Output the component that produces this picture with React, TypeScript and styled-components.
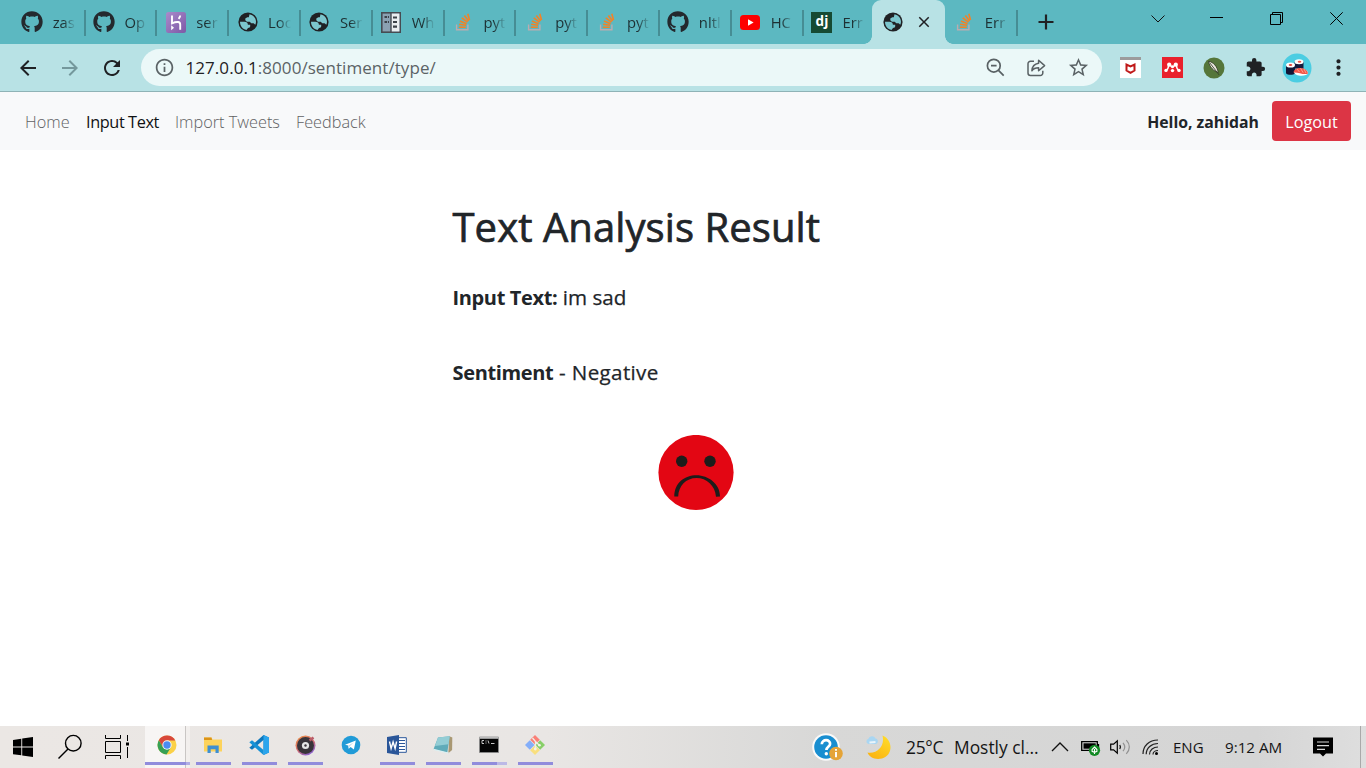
import type { ReactNode } from 'react';
import styled, { createGlobalStyle, css } from 'styled-components';
import { FaGithub } from 'react-icons/fa';
import {
  MdArrowBack,
  MdArrowForward,
  MdClose,
  MdExtension,
  MdInfoOutline,
  MdMoreVert,
  MdRefresh,
  MdStarOutline,
} from 'react-icons/md';

const GlobalStyle = createGlobalStyle`
  * {
    box-sizing: border-box;
  }

  body {
    margin: 0;
    overflow: hidden;
    background: white;
    font-family: 'Open Sans', 'Noto Sans', sans-serif;
  }

  svg {
    display: block;
    flex-shrink: 0;
  }
`;

const Screen = styled.div`
  width: 1366px;
  height: 768px;
  display: flex;
  flex-direction: column;
`;

/* ---------- browser tabs ---------- */

const TabStrip = styled.div`
  height: 44px;
  display: flex;
  padding-left: 13.8px;
  background: #5cb8c1;
`;

const Tab = styled.div<{ $divider?: boolean }>`
  width: 71.8px;
  height: 44px;
  display: flex;
  flex-shrink: 0;
  align-items: center;
  padding-left: 7.4px;
  color: #1d3033;

  ${({ $divider }) =>
    $divider &&
    css`
      background: linear-gradient(#468d94, #468d94) right 10px / 2px 26px no-repeat;
    `}
`;

const TabIcon = styled.span`
  width: 22px;
  display: flex;
  flex-shrink: 0;
  justify-content: center;
`;

const TabTitle = styled.span`
  width: 23px;
  margin-left: 9.5px;
  padding-bottom: 1px;
  font-size: 14.8px;
  line-height: 22px;
  white-space: nowrap;
  mask-image: linear-gradient(90deg, #000 45%, transparent 100%);
`;

const ActiveTab = styled.div`
  width: 73px;
  height: 44px;
  display: flex;
  flex-shrink: 0;
  position: relative;
  align-items: center;
  margin: 0 1px 0 -3.4px;
  padding-left: 11.5px;
  background: #b8e2e5;
  border-radius: 9px 9px 0 0;

  &::before,
  &::after {
    content: '';
    width: 8px;
    height: 8px;
    bottom: 0;
    position: absolute;
  }

  &::before {
    left: -8px;
    background: radial-gradient(circle at 0 0, transparent 7.5px, #b8e2e5 8px);
  }

  &::after {
    right: -8px;
    background: radial-gradient(circle at 100% 0, transparent 7.5px, #b8e2e5 8px);
  }

  .close {
    margin-left: 12px;
  }
`;

const NewTab = styled.div`
  width: 56px;
  display: flex;
  align-items: center;
  justify-content: center;
`;

const WindowControls = styled.div`
  height: 37px;
  display: flex;
  margin-left: auto;

  span {
    width: 60px;
    display: flex;
    align-items: center;
    justify-content: center;
  }

  span:first-child {
    width: 56px;
  }
`;

/* ---------- address bar ---------- */

const Toolbar = styled.div`
  height: 48px;
  display: flex;
  align-items: center;
  background: #b8e2e5;
  border-bottom: 1px solid #8fb3b6;
  color: #1f2124;
`;

const NavButtons = styled.div`
  width: 141px;
  display: flex;
  gap: 18px;
  padding-left: 16px;

  .disabled {
    color: #74989c;
  }
`;

const Omnibox = styled.div`
  width: 961px;
  height: 37px;
  display: flex;
  align-items: center;
  padding: 0 12px 0 13px;
  background: #ebf8f8;
  border-radius: 19px;
  color: #5b6366;
`;

const Url = styled.span`
  margin-left: 10.5px;
  margin-right: auto;
  font-size: 17px;
  line-height: 24px;
  letter-spacing: 0.06px;

  b {
    font-weight: 400;
    color: #1f2124;
  }
`;

const OmniActions = styled.div`
  display: flex;
  gap: 20px;
  align-items: center;
`;

const Extensions = styled.div`
  display: flex;
  align-items: center;
  margin-left: 8px;

  span {
    width: 41.6px;
    display: flex;
    justify-content: center;
  }
`;

/* ---------- page ---------- */

const Navbar = styled.nav`
  height: 58px;
  display: flex;
  align-items: center;
  padding: 0 15px 0 25px;
  background: #f8f9fa;
`;

const NavLink = styled.a<{ $active?: boolean; $width: number }>`
  width: ${({ $width }) => $width}px;
  padding-top: 1px;
  font-size: 16.3px;
  line-height: 24px;
  white-space: nowrap;
  font-weight: ${({ $active }) => ($active ? 400 : 300)};
  letter-spacing: ${({ $active }) => ($active ? -0.4 : 0)}px;
  color: ${({ $active }) => ($active ? '#101113' : '#606163')};
`;

const Greeting = styled.strong`
  margin-left: auto;
  padding-top: 1px;
  margin-right: 13px;
  font-size: 15.8px;
  font-weight: 700;
  color: #212529;
`;

const LogoutButton = styled.button`
  width: 79px;
  height: 40px;
  padding: 1px 0 0;
  border: 0;
  color: white;
  font: inherit;
  font-size: 16.2px;
  border-radius: 4px;
  background: #dc3545;
`;

const Content = styled.main`
  flex: 1;
  padding: 47px 0 0 452.5px;
  color: #212529;
`;

const Title = styled.h1`
  margin: 0;
  font-size: 40px;
  font-weight: 400;
  line-height: 60px;
  letter-spacing: 0.08px;
  white-space: nowrap;
  -webkit-text-stroke: 0.7px #212529;
`;

const ResultLine = styled.p<{ $spacing?: number }>`
  height: 30px;
  margin: 25px 0 45px;
  font-size: 20.6px;
  font-weight: 400;
  line-height: 30px;
  white-space: nowrap;
  letter-spacing: ${({ $spacing }) => $spacing ?? 0}px;
  -webkit-text-stroke: 0.25px #212529;

  b {
    font-size: 20px;
    font-weight: 700;
    letter-spacing: -0.35px;
    -webkit-text-stroke: 0;
  }

  & + & {
    margin: 0 0 48px;
  }
`;

const Face = styled.div`
  margin-left: 205px;
`;

/* ---------- taskbar ---------- */

const Taskbar = styled.footer`
  height: 42px;
  display: flex;
  background: linear-gradient(90deg, #ebe7e4 0%, #e9e6e4 40%, #d8d8d7 60%, #d5d5d5 92%, #dedede 100%);
`;

const SystemButton = styled.div<{ $width: number }>`
  width: ${({ $width }) => $width}px;
  display: flex;
  align-items: center;
  justify-content: center;
`;

const AppButton = styled.div<{ $running?: boolean }>`
  width: 46px;
  display: flex;
  padding-top: 9px;
  align-items: center;
  flex-direction: column;
  justify-content: space-between;

  &::after {
    content: '';
    width: 35px;
    height: 3px;
    margin-bottom: 3px;
    background: ${({ $running }) => ($running ? '#918cdc' : 'transparent')};
  }
`;

const StackedAppButton = styled(AppButton)`
  &::after {
    background: linear-gradient(90deg, #918cdc 71%, #bcb9e6 71%);
  }
`;

const ActiveAppButton = styled(AppButton)`
  width: 45px;
  align-items: flex-start;
  padding-left: 12px;
  background: linear-gradient(90deg, #f7f5f4 40px, #c9c6c4 40px 41px, #f2efed 41px);

  &::after {
    width: 45px;
    margin-left: -12px;
    background: linear-gradient(90deg, #918cdc 41px, #b1ade4 41px);
  }
`;

const Tray = styled.div`
  width: 549px;
  display: flex;
  align-items: center;
  margin-left: auto;
  border-right: 1px solid #a9a9a9;
  margin-right: 5px;
`;

const TrayItem = styled.span<{ $width: number }>`
  width: ${({ $width }) => $width}px;
  flex-shrink: 0;
`;

const TrayText = styled(TrayItem)<{ $size: number; $spacing?: number }>`
  color: #151515;
  padding-bottom: 1px;
  line-height: 22px;
  white-space: nowrap;
  font-size: ${({ $size }) => $size}px;
  letter-spacing: ${({ $spacing }) => $spacing ?? 0}px;
`;

/* ---------- drawings ---------- */

const GlobeIcon = () => (
  <svg width='20' height='20' viewBox='0 0 20 20'>
    <circle cx='10' cy='10' r='9.600' fill='#202124' />
    <g fill='#7cc6cd'>
      <path d='M2 9.800h4.300c2.300 0 3.600 1.200 3.600 2.900h2.300v1.500c0 1.200-.9 1.700-2.200 1.700l-1.500 2C4.700 17.400 2 14.200 2 9.800z' />
      <path d='M11.500 2.200c3.900.7 6.500 3.900 6.500 7.600 0 1.100-.3 2.200-.7 3l-1.700-1.500h-2.300l-1.600-1.500H8.900L7.300 8.200V6.500l2-1.300h1.500z' />
    </g>
  </svg>
);

const HerokuLogo = () => (
  <svg width='20' height='21' viewBox='0 0 20 21'>
    <defs>
      <linearGradient id='heroku' x1='0' y1='0' x2='1' y2='1'>
        <stop offset='0' stopColor='#a98bcb' />
        <stop offset='1' stopColor='#7d58a6' />
      </linearGradient>
    </defs>
    <rect width='20' height='21' rx='2.5' fill='url(#heroku)' />
    <path d='M6 3.5v7.8c2.200-1 4.200-1.500 6.100-1.300 1.500.2 2.100 1 2.100 2.400v5.400M14.200 3.500c-.1 1.200-.7 2.300-1.600 3.300' fill='none' stroke='white' strokeWidth='1.900' />
    <path d='M5.200 13.200v5l2.800-2.500z' fill='white' />
  </svg>
);

const StackLogo = () => (
  <svg width='16' height='18' viewBox='0 0 16 18'>
    <path d='M1.600 11.500v5.200h11.300v-5.200' fill='none' stroke='#bcabb0' strokeWidth='1.400' />
    <path
      d='M3.800 14.200h7M4.100 11.200l6.900 1.100M4.900 8l6.700 2.700M6.700 4.900l5.800 4.200M9.400 2.500l4.200 5.500M12.800.8l1.700 6.200'
      stroke='#f48225'
      strokeWidth='1.600'
    />
  </svg>
);

const CabinetIcon = () => (
  <svg width='20' height='21' viewBox='0 0 20 21'>
    <rect x='.8' y='.8' width='18.400' height='19.400' fill='#8ba1b2' stroke='#464b52' strokeWidth='1.600' />
    <path d='M10 1.600h8.400v17.800H10z' fill='#e9eef1' />
    <path d='M10 1v19' stroke='#464b52' strokeWidth='1.400' />
    <path d='M3.500 5h2.600M3.500 10h2.600M7 5h1M7 10h1M12 5.500h4M12 10h4M12 14.700h4' stroke='#3c4249' strokeWidth='2.200' />
  </svg>
);

const YoutubeLogo = () => (
  <svg width='20' height='15' viewBox='0 0 20 15'>
    <rect width='20' height='15' rx='3.500' fill='#fe0000' />
    <path d='M8 4.300v6.400l5.600-3.200z' fill='white' />
  </svg>
);

const DjangoLogo = styled.span`
  width: 21px;
  height: 21px;
  color: white;
  display: block;
  font-size: 13.5px;
  font-weight: 700;
  line-height: 18px;
  text-align: center;
  background: #164a33;
`;

const ZoomOutIcon = () => (
  <svg width='20' height='20' viewBox='0 0 20 20' fill='none' stroke='#596164' strokeWidth='1.700'>
    <circle cx='7.800' cy='7.700' r='6.400' />
    <path d='M5 7.700h5.600M12.500 12.400l5.200 5.200' />
  </svg>
);

const ShareIcon = () => (
  <svg width='21' height='20' viewBox='0 0 21 20' fill='none' stroke='#596164' strokeWidth='1.500'>
    <path d='M8 3.200H4.500a2.500 2.500 0 0 0-2.500 2.500v9.300a2.500 2.500 0 0 0 2.500 2.500h9.800a2.500 2.500 0 0 0 2.500-2.500v-2.200' />
    <path d='M12.600 2.200l6 5.400-6 5.200V9.800c-3 0-5.200.8-6.700 3 .2-4 2.600-7 6.700-7.600z' strokeLinejoin='round' />
  </svg>
);

const McAfeeIcon = () => (
  <svg width='21' height='21' viewBox='0 0 21 21'>
    <path d='M0 0h21v21H0z' fill='white' />
    <path d='M0 0h21v3H0z' fill='#9c9c9c' />
    <path d='M6.500 7.500v6l4 2.300 4-2.300v-6l-4 1.900z' fill='none' stroke='#c01818' strokeWidth='2' />
  </svg>
);

const MendeleyIcon = () => (
  <svg width='21' height='21' viewBox='0 0 21 21'>
    <path d='M0 0h21v21H0z' fill='#e9202c' />
    <g fill='white'>
      <circle cx='7.200' cy='7.600' r='2.100' />
      <circle cx='13.800' cy='7.600' r='2.100' />
      <circle cx='10.500' cy='9.700' r='1.500' />
      <circle cx='4' cy='13.400' r='1.700' />
      <circle cx='10.500' cy='13.600' r='1.700' />
      <circle cx='17' cy='13.400' r='1.700' />
    </g>
    <path d='M6.500 8c0 2.500-.5 4.200-2 5.200M14.500 8c0 2.500.5 4.200 2 5.200M8 8.500l2.500 1.500L13 8.500' stroke='white' strokeWidth='1.500' fill='none' />
  </svg>
);

const FeatherIcon = () => (
  <svg width='22' height='22' viewBox='0 0 22 22'>
    <circle cx='11' cy='11' r='10.500' fill='#55763a' />
    <path d='M5.500 4.200c4.800 1 8.800 5 9.700 11.500C10.800 14 6.300 10 5.500 4.200z' fill='#ece9df' stroke='#2b351f' strokeWidth='.8' />
    <path d='M6.500 5.500l9.700 12.500' stroke='#38432b' strokeWidth='.9' />
  </svg>
);

const SushiAvatar = () => (
  <svg width='30' height='30' viewBox='0 0 30 30'>
    <circle cx='15' cy='15' r='14.500' fill='#4bcde2' />
    <path d='M12.500 8.500v7h9v-7z' fill='#161a3c' />
    <ellipse cx='17' cy='8.800' rx='4.500' ry='2.500' fill='#fff' />
    <ellipse cx='17.500' cy='8.800' rx='1.800' ry='1' fill='#ee5a4d' />
    <path d='M4 12v8.300c1.500 2 7.500 2 9 0V12z' fill='#111636' />
    <ellipse cx='8.500' cy='12' rx='4.500' ry='2.600' fill='#fff' />
    <ellipse cx='8.500' cy='12' rx='1.800' ry='1' fill='#e4433b' />
    <path d='M12 19c0 4.500 13 5 14 1l-1-2.500z' fill='#fff' />
    <path d='M11.500 19.500c.5-4 5-5 8.500-4.300 4 .6 6.200 3.300 5.800 5.600-4.800 1.200-9.800-1.800-14.300-1.300z' fill='#f1574a' />
    <path d='M15 16l2.500 3M18.500 15.200l2.700 4.500M22 16l2 4' stroke='#ffa391' strokeWidth='.9' />
  </svg>
);

const SadFace = () => (
  <svg width='76' height='76' viewBox='0 0 76 76'>
    <circle cx='38' cy='37.500' r='37.600' fill='#e30613' />
    <circle cx='23.700' cy='26.200' r='5.700' fill='#1d1d1b' />
    <circle cx='52' cy='26.200' r='5.700' fill='#1d1d1b' />
    <path
      d='M16.300 61.500C16.300 48 26.500 40.300 38.500 40.300s23.500 8.700 23.500 21.200l-4 .3C57.200 50.500 48.500 43 38.500 43 28 43 20.500 51 20.200 61.500z'
      fill='#1d1d1b'
    />
  </svg>
);

const WindowsLogo = () => (
  <svg width='20' height='20' viewBox='0 0 20 20'>
    <path d='M0 2.900l8.300-1.200v7.900H0zM9.200 1.500L20 0v9.600H9.200zM0 10.500h8.300v7.800L0 17.200zM9.200 10.500H20V20L9.200 18.500z' />
  </svg>
);

const SearchGlass = () => (
  <svg width='26' height='26' viewBox='0 0 26 26' fill='none' stroke='#000' strokeWidth='1.400'>
    <circle cx='16.300' cy='9.200' r='7.800' />
    <path d='M11 15L1.500 24.500' />
  </svg>
);

const TaskViewIcon = () => (
  <svg width='26' height='24' viewBox='0 0 26 24' fill='none' stroke='#000'>
    <path d='M1.500 6.500h15v11h-15zM1.500 0v3.500h15V0M1.500 24v-3.500h15V24M23.500 0v6M23.500 12V23' />
    <path d='M22 7.500h3v3h-3z' fill='#000' stroke='none' />
  </svg>
);

const ChromeLogo = () => (
  <svg width='20' height='20' viewBox='0 0 20 20'>
    <circle cx='10' cy='10' r='9.500' fill='#fbd148' />
    <path d='M1.800 5.200A9.500 9.500 0 0 1 18.300 5.500H10L5.900 12.200z' fill='#d8483b' />
    <path d='M1.800 5.200A9.500 9.500 0 0 0 9.500 19.500l4.300-7H6z' fill='#36a055' />
    <circle cx='10' cy='10' r='4.700' fill='#f3f5f7' />
    <circle cx='10' cy='10' r='3.700' fill='#4b8cf4' />
  </svg>
);

const FolderIcon = () => (
  <svg width='20' height='20' viewBox='0 0 20 20'>
    <path d='M1 2.500h7.500l1 2H19v12H1z' fill='#fdd35b' />
    <path d='M1 2.500h7.500L9 5H1z' fill='#dc9418' />
    <path d='M4.500 18v-7.500h11.200V18h-3.200v-3.700H7.700V18z' fill='#3f8fd0' />
  </svg>
);

const VsCodeLogo = () => (
  <svg width='20' height='20' viewBox='0 0 20 20'>
    <path d='M14.500 0L20 2.500v15L14.500 20V5L3 14.800 .3 12.700z' fill='#0f78bd' />
    <path d='M14.500 20L.3 7.300 3 5.200 14.500 15z' fill='#1691d6' />
    <path d='M14.500 0L20 2.500v15L14.500 20z' fill='#2aa5ed' />
  </svg>
);

const DiscIcon = () => (
  <svg width='21' height='21' viewBox='0 0 21 21'>
    <defs>
      <linearGradient id='disc' x1='0' y1='0' x2='.6' y2='1'>
        <stop offset='0' stopColor='#ef913e' />
        <stop offset='.6' stopColor='#d26d73' />
        <stop offset='1' stopColor='#8c62ce' />
      </linearGradient>
    </defs>
    <circle cx='10.500' cy='10.500' r='10' fill='url(#disc)' />
    <circle cx='10.500' cy='10.500' r='8.500' fill='#39343a' />
    <path d='M14.500 5.500l4-3' stroke='#ba5c69' strokeWidth='2.600' />
    <circle cx='10.500' cy='10.500' r='3.600' fill='#e5e5e5' />
    <circle cx='10.500' cy='10.500' r='1.200' fill='#39343a' />
  </svg>
);

const TelegramLogo = () => (
  <svg width='20' height='20' viewBox='0 0 20 20'>
    <circle cx='10' cy='10' r='9.300' fill='#219bd7' />
    <path d='M4 9.800L14.800 5.600l-1.900 9-3.300-2.500-1.900 1.700-.5-3.200z' fill='white' />
    <path d='M7.200 10.700l5.600-3.500-4.300 4.300-.6 2.200z' fill='#b9dcef' />
  </svg>
);

const WordLogo = () => (
  <svg width='20' height='20' viewBox='0 0 20 20'>
    <path d='M10 2.700h9.300v14.600H10z' fill='white' stroke='#2b579a' strokeWidth='1' />
    <path d='M12 5.500h6M12 8.500h6M12 11.500h6M12 14.500h6' stroke='#2b579a' strokeWidth='1.200' />
    <path d='M0 2l12-2v20L0 18z' fill='#2a5699' />
    <path d='M2.500 6.500l1.600 7 2-6.500 2 6.500 1.500-7' fill='none' stroke='white' strokeWidth='1.400' />
  </svg>
);

const NotebookIcon = () => (
  <svg width='20' height='20' viewBox='0 0 20 20'>
    <path d='M16.300 1.200l3 1.300-.2 12.600-3.800 3.200z' fill='#a99873' />
    <path d='M5 2.500L16.700 1.300l-2.400 16.500L.5 14.300z' fill='#5fabb9' />
    <path d='M5 2.500l11.700-1.200-1.200 8L2 11z' fill='#93cdd5' />
    <path d='M.5 14.300l13.800 3.500 1.200-.3' stroke='#dceff1' fill='none' strokeWidth='1.200' />
  </svg>
);

const TerminalIcon = () => (
  <svg width='20' height='20' viewBox='0 0 20 20'>
    <path d='M.5 2h19v15.500H.5z' fill='#050505' stroke='#8c8c8c' strokeWidth='.8' />
    <path d='M.5 2h19v1.800H.5z' fill='#bcbcbc' />
    <path d='M5 5.500H3v3h2M7 5.500v1M7 7.500v1M9 5.500l1 3M12 8.500h3.500' stroke='#ddd' fill='none' strokeWidth='.9' />
  </svg>
);

const GitLogo = () => (
  <svg width='20' height='20' viewBox='0 0 20 20'>
    <path d='M10 0l4.800 4.800L10 9.500 5.200 4.800z' fill='#fa8077' />
    <path d='M4.800 5.200L9.500 10l-4.700 4.800L0 10z' fill='#84aef9' />
    <path d='M15.200 5.200L20 10l-4.800 4.800-4.700-4.800z' fill='#88cf68' />
    <path d='M10 10.500l4.800 4.700L10 20l-4.800-4.800z' fill='#f9df7e' />
    <path d='M7.500 3l3 3.500v7M10.500 6.500l4 4' stroke='#edf0ea' strokeWidth='1.300' fill='none' />
    <circle cx='10.300' cy='14' r='1.400' fill='#f4f4ec' />
    <circle cx='14.500' cy='10.300' r='1.300' fill='#f4f4ec' />
  </svg>
);

const HelpIcon = () => (
  <svg width='32' height='30' viewBox='0 0 32 30'>
    <circle cx='14' cy='15' r='13.800' fill='#fafafa' />
    <circle cx='14' cy='15' r='11.800' fill='#198ed0' />
    <path d='M9.800 12.300c0-5.600 8.700-5.200 8.300-.3-.2 2.800-3.700 2.900-3.700 6' fill='none' stroke='white' strokeWidth='2.700' />
    <circle cx='14.300' cy='21.700' r='1.700' fill='white' />
    <circle cx='24' cy='21.500' r='6.800' fill='#e5a437' />
    <path d='M24 20v5.300M24 17v1.700' stroke='white' strokeWidth='1.900' />
  </svg>
);

const MoonIcon = () => (
  <svg width='26' height='25' viewBox='0 0 26 25'>
    <defs>
      <linearGradient id='moon' x1='1' y1='0' x2='.4' y2='1'>
        <stop offset='0' stopColor='#ffdf2d' />
        <stop offset='1' stopColor='#fbb613' />
      </linearGradient>
    </defs>
    <path d='M16.500.5c11 4.500 10.500 20.200-.5 23C9 25 3.500 22.500 1.500 17.500c10.500 1.500 17.500-7 15-17z' fill='url(#moon)' />
    <path d='M2.700 9a2.700 2.700 0 0 1-.2-5.300c.5-3.100 5.900-3.600 6.900-.3 3.300.2 3.400 5.200 0 5.600z' fill='#a9d6f2' />
    <path d='M3.500 7.500l6-.5' stroke='#e9f4fb' strokeWidth='1.800' />
  </svg>
);

const BatteryIcon = () => (
  <svg width='20' height='18' viewBox='0 0 20 18'>
    <path d='M.7 3.700h15.600v8.600H.7zM17.500 6v4' fill='none' stroke='#000' strokeWidth='1.300' />
    <path d='M2.500 5.300h12.200v5.400H2.500z' />
    <circle cx='13.500' cy='12.300' r='5.600' fill='#118a24' />
    <path d='M13.500 16V11M13.500 9l2.400 2.500v1.800l-2.400 1-2.400-1v-1.800z' fill='none' stroke='white' strokeWidth='1.100' />
  </svg>
);

const SpeakerIcon = () => (
  <svg width='22' height='18' viewBox='0 0 22 18' fill='none' strokeWidth='1.200'>
    <path d='M.7 6.200h2.900L7.300 2.800v12.400L3.600 11.900H.7z' stroke='#000' />
    <path d='M9.800 7c.8 1.300.8 2.700 0 4' stroke='#000' />
    <path d='M13 4.800c2.200 2.600 2.200 5.800 0 8.400M16.300 2.200c4 4 4 9.600 0 13.600' stroke='#929292' />
  </svg>
);

const WifiIcon = () => (
  <svg width='18' height='18' viewBox='0 0 18 18' fill='none' stroke='#222' strokeWidth='1.200'>
    <path d='M1 16C1 8 7 2 16 2M4.200 16.300C4.200 10 9.500 5.500 16 5.500M7.500 16.500C7.500 12 11.500 9 16 9M11 16.500c0-2.500 2.500-4 5-4' />
    <circle cx='14.500' cy='15.500' r='1.500' fill='#000' stroke='none' />
  </svg>
);

const NotificationIcon = () => (
  <svg width='20' height='20' viewBox='0 0 20 20'>
    <path d='M0 .5h20v16h-7l-3 3-3-3H0z' />
    <path d='M4 5h12M4 8.700h12M4 12.300h8' stroke='#d8d8d8' strokeWidth='1.200' />
  </svg>
);

const github = <FaGithub size={22} color='#24292e' />;
const globe = <GlobeIcon />;
const stack = <StackLogo />;

const tabs: { title: string; icon: ReactNode }[] = [
  { title: 'zas', icon: github },
  { title: 'Op', icon: github },
  { title: 'ser', icon: <HerokuLogo /> },
  { title: 'Loc', icon: globe },
  { title: 'Ser', icon: globe },
  { title: 'Wh', icon: <CabinetIcon /> },
  { title: 'pyt', icon: stack },
  { title: 'pyt', icon: stack },
  { title: 'pyt', icon: stack },
  { title: 'nltl', icon: github },
  { title: 'HC', icon: <YoutubeLogo /> },
  { title: 'Err', icon: <DjangoLogo>dj</DjangoLogo> },
];

function BrowserChrome() {
  return (
    <>
      <TabStrip>
        {tabs.map(({ title, icon }, i) => (
          <Tab key={i} $divider={i < tabs.length - 1}>
            <TabIcon>{icon}</TabIcon>
            <TabTitle>{title}</TabTitle>
          </Tab>
        ))}
        <ActiveTab>
          {globe}
          <MdClose className='close' size={18} color='#202124' />
        </ActiveTab>
        <Tab $divider>
          <TabIcon>{stack}</TabIcon>
          <TabTitle>Err</TabTitle>
        </Tab>
        <NewTab>
          <svg width='16' height='16' viewBox='0 0 16 16' stroke='#202124' strokeWidth='2.200'>
            <path d='M8 .5v15M.5 8h15' />
          </svg>
        </NewTab>
        <WindowControls>
          <span>
            <svg width='14' height='8' viewBox='0 0 14 8' fill='none' stroke='#111'>
              <path d='M.5.500l6.500 6.500L13.500.5' />
            </svg>
          </span>
          <span>
            <svg width='13' height='3' viewBox='0 0 13 3'>
              <path d='M0 0h13v1H0z' />
            </svg>
          </span>
          <span>
            <svg width='13' height='13' viewBox='0 0 13 13' fill='none' stroke='#000'>
              <path d='M.5 2.500h10v10H.5zM2.500 2.500v-2h10v10h-2' />
            </svg>
          </span>
          <span>
            <svg width='13' height='13' viewBox='0 0 13 13' fill='none' stroke='#000'>
              <path d='M.3.300l12.400 12.400M12.700.3L.3 12.700' />
            </svg>
          </span>
        </WindowControls>
      </TabStrip>

      <Toolbar>
        <NavButtons>
          <MdArrowBack size={24} />
          <MdArrowForward className='disabled' size={24} />
          <MdRefresh size={24} />
        </NavButtons>
        <Omnibox>
          <MdInfoOutline size={21} />
          <Url>
            <b>127.0.0.1</b>:8000/sentiment/type/
          </Url>
          <OmniActions>
            <ZoomOutIcon />
            <ShareIcon />
            <MdStarOutline size={23} />
          </OmniActions>
        </Omnibox>
        <Extensions>
          <span>
            <McAfeeIcon />
          </span>
          <span>
            <MendeleyIcon />
          </span>
          <span>
            <FeatherIcon />
          </span>
          <span>
            <MdExtension size={21} />
          </span>
          <span>
            <SushiAvatar />
          </span>
          <span>
            <MdMoreVert size={25} />
          </span>
        </Extensions>
      </Toolbar>
    </>
  );
}

function ResultPage() {
  return (
    <>
      <Navbar>
        <NavLink $width={61}>Home</NavLink>
        <NavLink $width={89} $active>
          Input Text
        </NavLink>
        <NavLink $width={121}>Import Tweets</NavLink>
        <NavLink $width={72}>Feedback</NavLink>
        <Greeting>Hello, zahidah</Greeting>
        <LogoutButton>Logout</LogoutButton>
      </Navbar>

      <Content>
        <Title>Text Analysis Result</Title>
        <ResultLine>
          <b>Input Text:</b> im sad
        </ResultLine>
        <ResultLine $spacing={0.35}>
          <b>Sentiment</b> - Negative
        </ResultLine>
        <Face>
          <SadFace />
        </Face>
      </Content>
    </>
  );
}

function WindowsTaskbar() {
  return (
    <Taskbar>
      <SystemButton $width={46}>
        <WindowsLogo />
      </SystemButton>
      <SystemButton $width={47}>
        <SearchGlass />
      </SystemButton>
      <SystemButton $width={48}>
        <TaskViewIcon />
      </SystemButton>
      <SystemButton $width={4} />
      <ActiveAppButton>
        <ChromeLogo />
      </ActiveAppButton>
      <AppButton $running>
        <FolderIcon />
      </AppButton>
      <AppButton $running>
        <VsCodeLogo />
      </AppButton>
      <AppButton $running>
        <DiscIcon />
      </AppButton>
      <AppButton>
        <TelegramLogo />
      </AppButton>
      <AppButton $running>
        <WordLogo />
      </AppButton>
      <AppButton $running>
        <NotebookIcon />
      </AppButton>
      <StackedAppButton $running>
        <TerminalIcon />
      </StackedAppButton>
      <AppButton $running>
        <GitLogo />
      </AppButton>

      <Tray>
        <TrayItem $width={54}>
          <HelpIcon />
        </TrayItem>
        <TrayItem $width={40}>
          <MoonIcon />
        </TrayItem>
        <TrayText $width={48} $size={17.4} $spacing={-0.3}>
          25°C
        </TrayText>
        <TrayText $width={97} $size={17.4}>
          Mostly cl...
        </TrayText>
        <TrayItem $width={30}>
          <svg width='18' height='10' viewBox='0 0 18 10' fill='none' stroke='#111' strokeWidth='1.300'>
            <path d='M1 9l8-8 8 8' />
          </svg>
        </TrayItem>
        <TrayItem $width={29}>
          <BatteryIcon />
        </TrayItem>
        <TrayItem $width={32}>
          <SpeakerIcon />
        </TrayItem>
        <TrayItem $width={31}>
          <WifiIcon />
        </TrayItem>
        <TrayText $width={52} $size={15}>
          ENG
        </TrayText>
        <TrayText $width={88} $size={15.2}>
          9:12 AM
        </TrayText>
        <NotificationIcon />
      </Tray>
    </Taskbar>
  );
}

function App() {
  return (
    <Screen>
      <GlobalStyle />
      <BrowserChrome />
      <ResultPage />
      <WindowsTaskbar />
    </Screen>
  );
}

export default App;
